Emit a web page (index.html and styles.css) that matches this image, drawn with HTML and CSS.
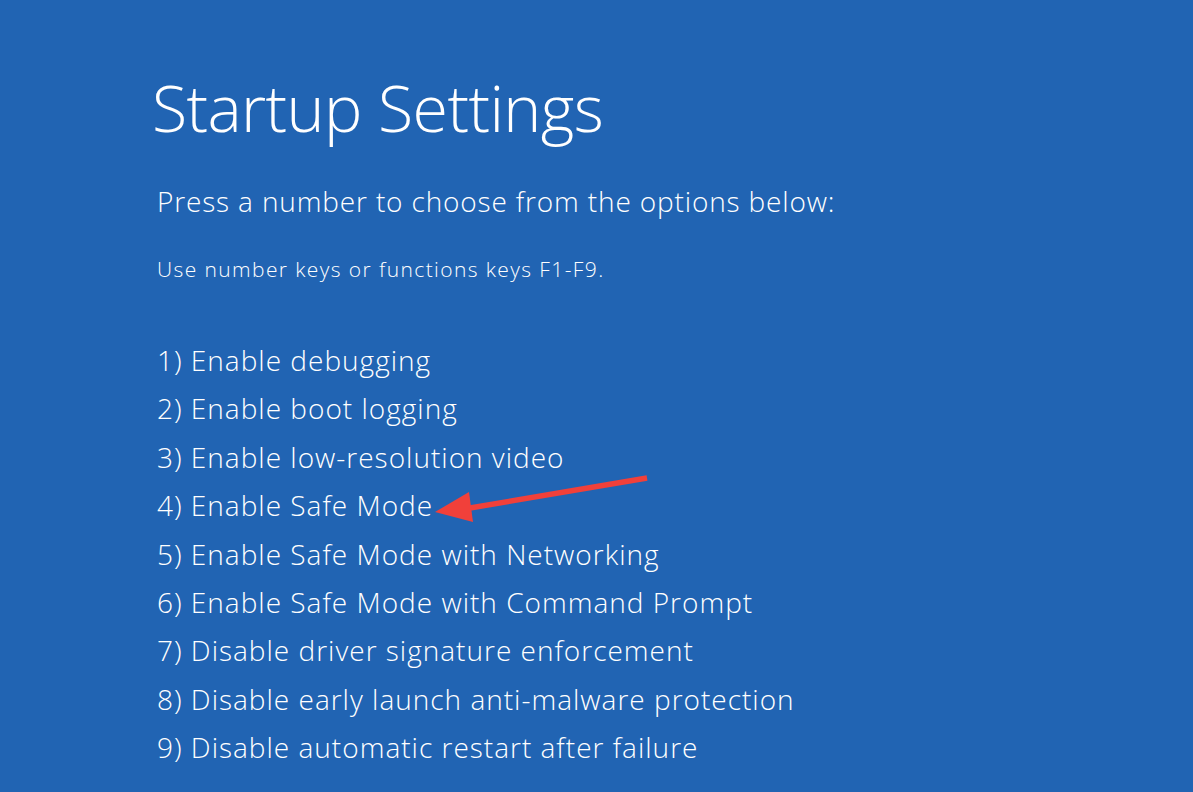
FILE: index.html
```html
<!DOCTYPE html>
<html lang="en">

<head>
    <meta charset="UTF-8">
    <title>Startup Settings</title>
    <link rel="stylesheet" href="styles.css">
</head>

<body>
    <div class="screen">
        <h1 class="title">Startup Settings</h1>
        <p class="prompt">Press a number to choose from the options below:</p>
        <p class="hint">Use number keys or functions keys F1-F9.</p>

        <ol class="options">
            <li>1) Enable debugging</li>
            <li>2) Enable boot logging</li>
            <li>3) Enable low-resolution video</li>
            <li class="marked">4) Enable Safe Mode</li>
            <li>5) Enable Safe Mode with Networking</li>
            <li>6) Enable Safe Mode with Command Prompt</li>
            <li>7) Disable driver signature enforcement</li>
            <li>8) Disable early launch anti-malware protection</li>
            <li>9) Disable automatic restart after failure</li>
        </ol>

        <!-- red annotation arrow pointing at option 4 -->
        <svg class="arrow" width="230" height="60" viewBox="0 0 230 60">
            <line x1="222" y1="13" x2="45" y2="43" stroke="#f1403a" stroke-width="5.5" />
            <polygon points="10,47 44,27 48,57" fill="#f1403a" />
        </svg>
    </div>
</body>

</html>
```

FILE: styles.css
```css
html,
body {
    margin: 0;
    height: 100%;
}

body {
    background-color: #2164b3;
    color: #fff;
    font-family: "Open Sans", "Noto Sans", sans-serif;
    overflow: hidden;
}

.screen {
    position: relative;
    padding: 62px 0 0 157px;
}

.title {
    margin: 0 0 0 -5px;
    font-size: 64.5px;
    font-weight: 300;
    line-height: 90px;
    letter-spacing: -0.6px;
}

.prompt {
    margin: 29px 0 0;
    font-size: 28px;
    font-weight: 300;
    line-height: 40px;
    letter-spacing: 0.85px;
}

.hint {
    margin: 36px 0 0;
    font-size: 21px;
    font-weight: 300;
    line-height: 24px;
    letter-spacing: 1.4px;
}

.options {
    list-style: none;
    margin: 55px 0 0;
    padding: 0;
    font-size: 28px;
    font-weight: 300;
    letter-spacing: 1px;
}

.options li {
    line-height: 48.4px;
}

.arrow {
    position: absolute;
    left: 425px;
    top: 465px;
}
```
